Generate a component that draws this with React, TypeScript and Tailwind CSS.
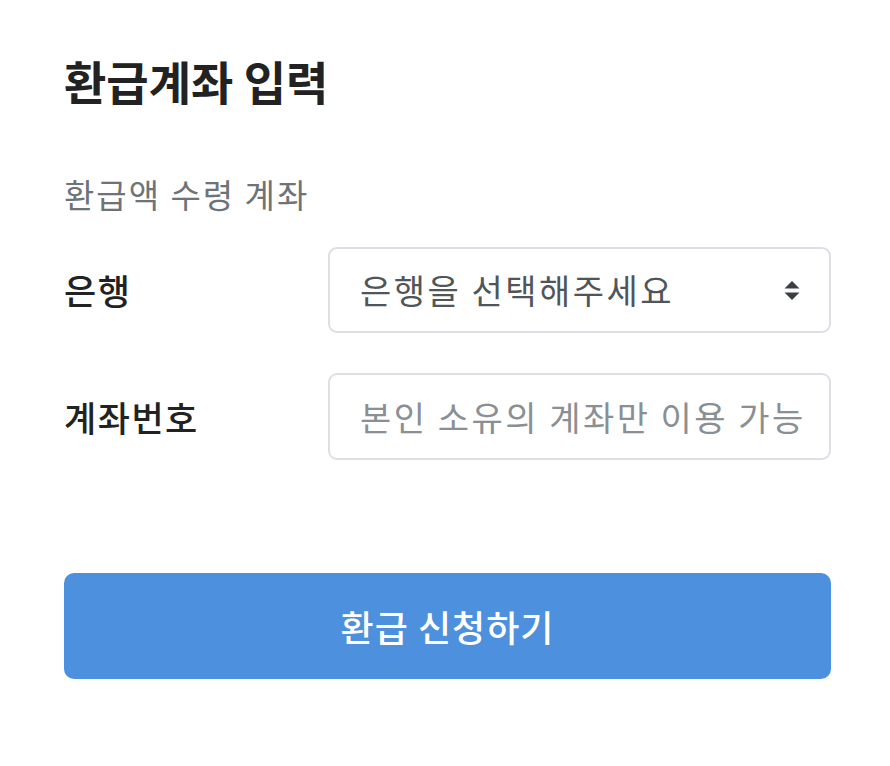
import React from "react";

export default function App() {
  const font = { fontFamily: '"Noto Sans CJK KR", "Noto Sans", sans-serif' };
  return (
    <div className="w-[890px] h-[766px] bg-white pl-[64px] pr-[59px] pt-[52px] flex flex-col" style={font}>
      <h1 className="text-[46px] leading-[56px] font-bold text-[#222]">환급계좌 입력</h1>
      <div className="mt-[66px] text-[33px] leading-[40px] tracking-[2px] text-[#6e7378]">환급액 수령 계좌</div>
      <div className="mt-[33px] flex items-center">
        <div className="w-[264px] text-[35px] leading-[40px] font-medium tracking-[1.5px] text-[#222]">은행</div>
        <div className="flex-1 h-[86px] border-2 border-[#dcdfe3] rounded-[9px] flex items-center pl-[30px] pr-[29px]">
          <span className="flex-1 text-[34px] leading-[40px] tracking-[2.5px] text-[#50555a]">은행을 선택해주세요</span>
          <svg width="16" height="23" viewBox="0 0 16 23">
            <path d="M8 2 L15.5 9.5 L0.5 9.5 Z" fill="#3a3f44" />
            <path d="M8 21 L15.5 13.5 L0.5 13.5 Z" fill="#3a3f44" />
          </svg>
        </div>
      </div>
      <div className="mt-[40px] flex items-center">
        <div className="w-[264px] text-[35px] leading-[40px] font-medium tracking-[1.5px] text-[#222]">계좌번호</div>
        <div className="flex-1 h-[87px] border-2 border-[#dcdfe3] rounded-[9px] flex items-center pl-[30px] overflow-hidden">
          <span className="whitespace-nowrap text-[34px] leading-[40px] tracking-[2.5px] text-[#8a8f94]">본인 소유의 계좌만 이용 가능</span>
        </div>
      </div>
      <button className="mt-[113px] h-[106px] w-full rounded-[10px] bg-[#4d90de] text-white text-[36px] leading-[40px] tracking-[1px] font-medium">
        환급 신청하기
      </button>
    </div>
  );
}
